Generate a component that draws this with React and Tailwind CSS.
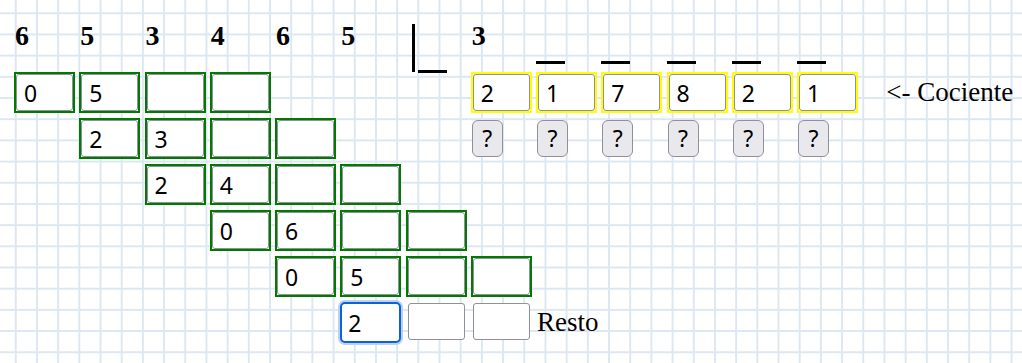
import React from "react";

const serif = "font-['Liberation_Serif',serif]";
const inputCls =
  "block w-full h-full border border-[#8f8f9d] rounded-[3px] bg-white pl-[7px] text-[23px] text-black outline-none font-['Noto_Sans',sans-serif]";

function GreenBox({ v }) {
  return (
    <div className="ml-[2px] w-[61px] h-[41px] border-2 border-[#007a00] bg-white">
      <input defaultValue={v} className={inputCls} />
    </div>
  );
}

function YellowBox({ v }) {
  return (
    <div className="ml-[2px] w-[61px] h-[41px] border-2 border-[#ffff00] bg-white">
      <input defaultValue={v} className={inputCls} />
    </div>
  );
}

function PlainBox({ v }) {
  return (
    <input
      defaultValue={v}
      className="block ml-[4px] mt-[1px] w-[57px] h-[37px] border border-[#8f8f9d] rounded-[3px] bg-white pl-[7px] text-[23px] text-black outline-none font-['Noto_Sans',sans-serif]"
    />
  );
}

function FocusBox({ v }) {
  return (
    <input
      defaultValue={v}
      className="block ml-[2px] w-[61px] h-[41px] border-2 border-[#0b62dc] rounded-[5px] shadow-[0_0_0_2px_#bcd2f1] bg-white pl-[6px] text-[23px] text-black outline-none font-['Noto_Sans',sans-serif]"
    />
  );
}

function QButton() {
  return (
    <button className="ml-[3px] mt-[2px] w-[31px] h-[37px] rounded-[6px] border border-[#8f8f9d] bg-[#e9e9ed] text-[23px] leading-none text-black flex items-center justify-center font-['Noto_Sans',sans-serif]">
      ?
    </button>
  );
}

function Label({ children, pl }) {
  return (
    <div className={`flex items-center h-[41px] whitespace-nowrap text-[27px] text-black ${serif} ${pl}`}>
      {children}
    </div>
  );
}

const rows = [
  {
    0: <GreenBox v="0" />,
    1: <GreenBox v="5" />,
    2: <GreenBox v="" />,
    3: <GreenBox v="" />,
    7: <YellowBox v="2" />,
    8: <YellowBox v="1" />,
    9: <YellowBox v="7" />,
    10: <YellowBox v="8" />,
    11: <YellowBox v="2" />,
    12: <YellowBox v="1" />,
    13: <Label pl="pl-[26px]">&lt;- Cociente</Label>,
  },
  {
    1: <GreenBox v="2" />,
    2: <GreenBox v="3" />,
    3: <GreenBox v="" />,
    4: <GreenBox v="" />,
    7: <QButton />,
    8: <QButton />,
    9: <QButton />,
    10: <QButton />,
    11: <QButton />,
    12: <QButton />,
  },
  {
    2: <GreenBox v="2" />,
    3: <GreenBox v="4" />,
    4: <GreenBox v="" />,
    5: <GreenBox v="" />,
  },
  {
    3: <GreenBox v="0" />,
    4: <GreenBox v="6" />,
    5: <GreenBox v="" />,
    6: <GreenBox v="" />,
  },
  {
    4: <GreenBox v="0" />,
    5: <GreenBox v="5" />,
    6: <GreenBox v="" />,
    7: <GreenBox v="" />,
  },
  {
    5: <FocusBox v="2" />,
    6: <PlainBox v="" />,
    7: <PlainBox v="" />,
    8: <Label pl="pl-[3px]">Resto</Label>,
  },
];

const gridCls = "grid grid-cols-[repeat(13,65.25px)_auto]";
const headDigit = `pt-[21px] pl-[3px] text-[28px] font-bold leading-[30px] text-black ${serif}`;

function Header() {
  const digits = ["6", "5", "3", "4", "6", "5"];
  return (
    <div className={`${gridCls} h-[72px]`}>
      {digits.map((d, i) => (
        <div key={i} className={headDigit}>
          {d}
        </div>
      ))}
      <div className="pt-[15px] pl-[8.5px] flex items-end gap-[3px]">
        <div className="w-[3px] h-[48px] bg-black" />
        <div className="w-[29px] h-[3px] bg-black translate-y-[1px]" />
      </div>
      <div className={headDigit}>3</div>
      {[8, 9, 10, 11, 12].map((c) => (
        <div key={c} className="pt-[61px] pl-[2px]">
          <div className="w-[29px] h-[3px] bg-black" />
        </div>
      ))}
      <div />
    </div>
  );
}

export default function App() {
  return (
    <div className="w-full h-[363px] overflow-hidden bg-white bg-[linear-gradient(to_right,#dde7f2_2px,transparent_2px),linear-gradient(to_bottom,#dde7f2_2px,transparent_2px)] bg-[size:21.2px_21.2px] bg-[position:14.8px_12.3px]">
      <div className="pl-[12px]">
        <Header />
        {rows.map((r, ri) => (
          <div key={ri} className={`${gridCls} h-[46px]`}>
            {Array.from({ length: 14 }).map((_, ci) => (
              <div key={ci}>{r[ci] || null}</div>
            ))}
          </div>
        ))}
      </div>
    </div>
  );
}
